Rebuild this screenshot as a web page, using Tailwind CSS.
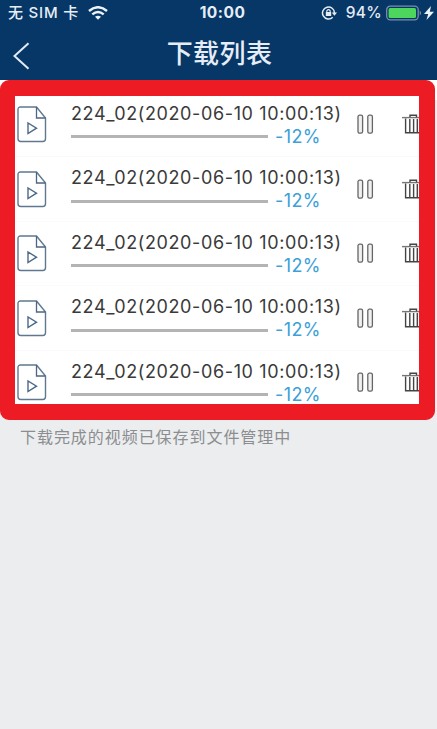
<!DOCTYPE html>
<html lang="zh-CN">
<head>
<meta charset="utf-8">
<title>下载列表</title>
<script src="https://cdn.jsdelivr.net/npm/@tailwindcss/browser@4"></script>
</head>
<body class="bg-[#ebedef] font-['Inter','Noto_Sans_CJK_SC',sans-serif]">
<svg class="hidden">
  <symbol id="file" viewBox="0 0 30 37">
    <path d="M3.5 1H19.5L28.5 12V32.8Q28.5 35.5 25.8 35.5H3.7Q1 35.5 1 32.8V3.5Q1 1 3.5 1Z" fill="#fff" stroke="#5f7890" stroke-width="1.4"/>
    <path d="M19.5 1V12H28.5" fill="none" stroke="#4c6683" stroke-width="1.3"/>
    <path d="M11 17V27.5L19.5 22.2Z" fill="none" stroke="#4c6888" stroke-width="1.4"/>
  </symbol>
  <symbol id="pause" viewBox="0 0 17 21">
    <rect x="1" y="1.2" width="4.6" height="18" rx="1.6" fill="#f0f0f0" stroke="#666" stroke-width="1.3"/>
    <rect x="10.8" y="1.2" width="4.6" height="18" rx="1.6" fill="#f0f0f0" stroke="#666" stroke-width="1.3"/>
  </symbol>
  <symbol id="trash" viewBox="0 0 23 21">
    <path d="M0 3.6H23" fill="none" stroke="#777" stroke-width="1.4"/>
    <path d="M8 3.2V1.2H14.5V3.2M3.6 4.5V18.7H18.8V4.5M7.8 5V18.5M11.6 5V18.5M15.3 5V18.5" fill="none" stroke="#444" stroke-width="1.4"/>
  </symbol>
</svg>
<div class="w-[437px] h-[729px] overflow-hidden flex flex-col">
  <header class="h-20 shrink-0 bg-[#063767] text-[#e6edf5]">
    <div class="h-[26px] grid grid-cols-3 items-center pl-2 pr-[3px] text-[15px] font-medium whitespace-nowrap">
      <div class="flex items-center gap-[9px]">
        <span class="tracking-[0.8px]">无 SIM 卡</span>
        <svg class="w-5 h-[14px]" viewBox="0 0 20 14" fill="none" stroke="#edf2f8" stroke-width="2.5"><path d="M1 5Q10 -2.5 19 5M4.3 8.4Q10 3.7 15.7 8.4"/><path d="M7 10.8Q10 8.5 13 10.8L10 13.7Z" fill="#edf2f8" stroke="none"/></svg>
      </div>
      <div class="text-center text-[15.5px] pl-[3px] font-bold tracking-[0.5px]">10:00</div>
      <div class="flex items-center justify-end">
        <svg class="w-4 h-[14px] mr-[9px]" viewBox="0 0 16 14" fill="none" stroke="#e6edf5"><path d="M13.5 7A6 6 0 1 0 11.7 11.3" stroke-width="1.5"/><path d="M10.8 6.5H16L13.4 9.7Z" fill="#e6edf5" stroke="none"/><rect x="4.8" y="6" width="5.4" height="4" fill="#e6edf5" stroke="none"/><path d="M5.8 6V4.8Q7.5 2.5 9.2 4.8V6" stroke-width="1.1"/></svg>
        <span class="text-[15.5px] tracking-[0.3px]">94%</span>
        <svg class="w-[37px] h-4 ml-[4px]" viewBox="0 0 37 16"><rect x=".7" y="1.2" width="31.5" height="13.6" rx="3.5" fill="#063767" stroke="#7890a8" stroke-width="1.3"/><rect x="2.6" y="3" width="27.4" height="10" rx="1.5" fill="#4cd65e"/><path d="M33.7 5.5Q36.5 8 33.7 10.5Z" fill="#7890a8"/></svg>
        <svg class="w-[10px] h-[14px] ml-[1px]" viewBox="0 0 10 14"><path d="M7 0L0 8H4.2L2.5 14L10 5.7H5.8Z" fill="#edf2f8"/></svg>
      </div>
    </div>
    <div class="h-[54px] grid grid-cols-[60px_1fr_60px] items-center">
      <svg class="w-[17px] h-7 ml-[13px] mt-[4px]" viewBox="0 0 17 28" fill="none" stroke="#e3ebf4" stroke-width="2"><path d="M15.5 1.3L1.5 14L15.5 26.7"/></svg>
      <h1 class="text-center text-[26px] leading-[54px] pt-[1px] pl-[2px] font-medium tracking-[0.4px]">下载列表</h1>
    </div>
  </header>
  <section class="bg-[linear-gradient(#fff_20px,#ebedef_20px)] h-[340px] shrink-0">
    <div id="list" class="w-[435px] h-[340px] border-[#ed1c24] border-l-[15px] border-r-[16px] border-t-[16px] border-b-[16px] rounded-[9px] bg-white overflow-hidden"></div>
  </section>
  <p class="pl-[20px] pt-[5px] text-[16px] leading-6 tracking-[0.95px] text-[#8b8d90] whitespace-nowrap">下载完成的视频已保存到文件管理中</p>
</div>
<template id="row">
  <div class="h-[64.6px] w-[420px] flex items-start bg-[linear-gradient(#fff_60px,#fafafa_60px,#fafafa_61px,#fff_61px)]">
    <svg class="w-[30px] h-[37px] ml-[2px] mt-[10px] shrink-0"><use href="#file"/></svg>
    <div class="ml-[24px] w-[286px] shrink-0 pt-[6.5px]">
      <div class="text-[18px] leading-[22px] tracking-[0.62px] text-[#3a3a3a] whitespace-nowrap">224_02(2020-06-10 10:00:13)</div>
      <div class="flex items-center h-6">
        <div class="w-[197px] h-[3px] bg-[#b4b4b4]"></div>
        <span class="ml-[7px] text-[18px] leading-6 tracking-[0.4px] text-[#3b9fd8]">-12%</span>
      </div>
    </div>
    <svg class="w-[17px] h-[21px] mt-[18px] shrink-0"><use href="#pause"/></svg>
    <svg class="w-[23px] h-[21px] ml-[28px] mt-[18px] shrink-0"><use href="#trash"/></svg>
  </div>
</template>
<script>
  const list = document.getElementById('list'), row = document.getElementById('row');
  for (let i = 0; i < 5; i++) list.append(row.content.cloneNode(true));
</script>
</body>
</html>
